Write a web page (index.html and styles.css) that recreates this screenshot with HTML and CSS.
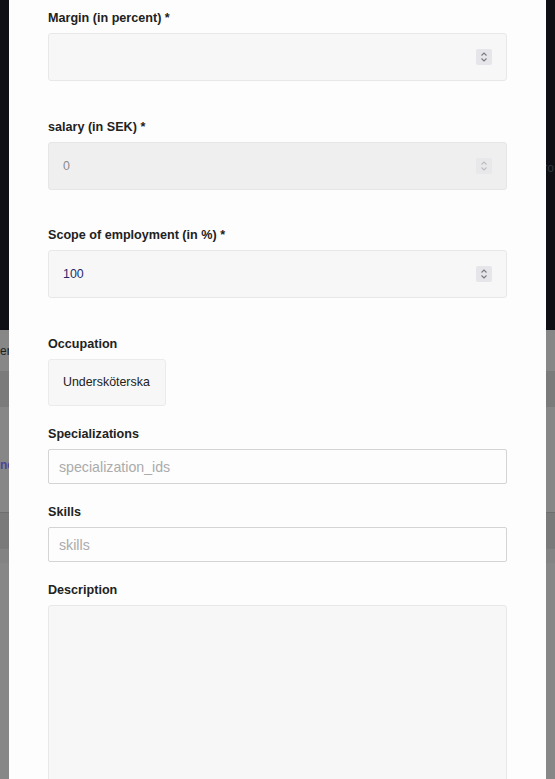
FILE: index.html
```html
<!DOCTYPE html>
<html lang="en">
<head>
<meta charset="utf-8">
<title>Edit position</title>
<link rel="stylesheet" href="styles.css">
</head>
<body>
<div class="page">
  <div class="bg-head"><span class="bg-peek-right">ro</span></div>
  <div class="bg-row bg-r1"><span class="bg-peek">ers</span></div>
  <div class="bg-row bg-r2"></div>
  <div class="bg-row bg-r3"><span class="bg-peek bg-link">nc</span></div>
  <div class="bg-row bg-r4"></div>
  <div class="bg-row bg-r5"></div>
</div>

<div class="modal">
  <form class="form">
    <div class="field field-num">
      <label class="label">Margin (in percent) *</label>
      <div class="num">
        <input class="num-input" type="text" value="">
        <span class="spin"><svg viewBox="0 0 16 16" width="16" height="16"><path d="M5.5 6.5 L8 4 L10.5 6.5 M5.5 9.5 L8 12 L10.5 9.5" fill="none" stroke="#7a7a7e" stroke-width="1.1"/></svg></span>
      </div>
    </div>
    <div class="field field-num">
      <label class="label">salary (in SEK) *</label>
      <div class="num num-disabled">
        <input class="num-input" type="text" value="0" disabled>
        <span class="spin"><svg viewBox="0 0 16 16" width="16" height="16"><path d="M5.5 6.5 L8 4 L10.5 6.5 M5.5 9.5 L8 12 L10.5 9.5" fill="none" stroke="#bdbdc0" stroke-width="1.1"/></svg></span>
      </div>
    </div>
    <div class="field field-num">
      <label class="label">Scope of employment (in %) *</label>
      <div class="num">
        <input class="num-input num-val" type="text" value="100">
        <span class="spin"><svg viewBox="0 0 16 16" width="16" height="16"><path d="M5.5 6.5 L8 4 L10.5 6.5 M5.5 9.5 L8 12 L10.5 9.5" fill="none" stroke="#7a7a7e" stroke-width="1.1"/></svg></span>
      </div>
    </div>
    <div class="field">
      <label class="label">Occupation</label>
      <div class="chip">Undersköterska</div>
    </div>
    <div class="field">
      <label class="label">Specializations</label>
      <input class="text-input" type="text" placeholder="specialization_ids">
    </div>
    <div class="field">
      <label class="label">Skills</label>
      <input class="text-input" type="text" placeholder="skills">
    </div>
    <div class="field">
      <label class="label">Description</label>
      <textarea class="area"></textarea>
    </div>
  </form>
</div>
</body>
</html>
```

FILE: styles.css
```css
html, body {
  margin: 0;
  padding: 0;
  height: 100%;
  overflow: hidden;
}
body {
  background: #878787;
  font-family: "Liberation Sans", Arial, Helvetica, sans-serif;
  color: #222;
}
.page {
  display: flex;
  flex-direction: column;
}
.bg-head {
  height: 330px;
  background: #0f1016;
  display: flex;
  justify-content: flex-end;
  align-items: flex-start;
  padding-right: 1px;
}
.bg-peek-right {
  margin-top: 162px;
  font-size: 12px;
  line-height: 12px;
  color: #34353c;
  white-space: nowrap;
}
.bg-row {
  display: flex;
  align-items: center;
}
.bg-peek {
  white-space: nowrap;
  font-size: 12px;
  color: #1e1e1e;
}
.bg-link {
  font-weight: bold;
  color: #4a469a;
  margin-top: 10px;
}
.bg-r1 { height: 41px; background: #878787; }
.bg-r2 { height: 36px; background: #7b7b7c; }
.bg-r3 { height: 105px; background: #878787; }
.bg-r4 { height: 35px; background: #7a7a7b; border-top: 1px solid #6e6e6e; }
.bg-r5 { height: 14px; background: #838383; border-top: 1px solid #7b7b7b; }

.modal {
  position: fixed;
  top: 0;
  left: 9px;
  width: 537px;
  height: 100vh;
  background: #fdfdfd;
  overflow: hidden;
}
.form {
  padding: 10px 39px 0 39px;
  display: flex;
  flex-direction: column;
}
.field {
  display: flex;
  flex-direction: column;
  align-items: flex-start;
  margin-bottom: 20px;
}
.field-num {
  margin-bottom: 37.5px;
}
.label {
  font-size: 12.6px;
  line-height: 16px;
  font-weight: bold;
  color: #222;
  margin-bottom: 7px;
}
.num {
  box-sizing: border-box;
  width: 459px;
  height: 48px;
  display: flex;
  align-items: center;
  background: #f7f7f7;
  border: 1px solid #e8e8e8;
  border-radius: 3px;
  padding: 0 14px 0 14px;
}
.num-disabled {
  background: #efefef;
  border-color: #e6e6e6;
}
.num-input {
  flex: 1;
  min-width: 0;
  border: 0;
  outline: none;
  background: transparent;
  padding: 0;
  margin: 0;
  font-family: "Liberation Sans", Arial, Helvetica, sans-serif;
  font-size: 12.4px;
  color: #222;
}
.num-disabled .num-input {
  color: #8a8a8a;
}
.num-val {
  color: #27276a;
}
.spin {
  display: flex;
  width: 16px;
  height: 16px;
  background: #e6e6ea;
  border-radius: 2px;
}
.num-disabled .spin {
  background: #e8e8ea;
}
.chip {
  box-sizing: border-box;
  height: 47.5px;
  display: flex;
  align-items: center;
  padding: 0 15px 0 14px;
  background: #f7f7f7;
  border: 1px solid #ebebeb;
  border-radius: 3px;
  font-size: 12.4px;
  color: #222;
}
.text-input {
  box-sizing: border-box;
  width: 459px;
  height: 35px;
  border: 1px solid #d4d4d4;
  border-radius: 2px;
  background: #fdfdfd;
  padding: 0 10px;
  margin: 0;
  font-family: "Liberation Sans", Arial, Helvetica, sans-serif;
  font-size: 14.2px;
  color: #222;
  outline: none;
}
.text-input::placeholder {
  color: #ababab;
}
.area {
  box-sizing: border-box;
  width: 459px;
  height: 260px;
  background: #f7f7f7;
  border: 1px solid #e8e8e8;
  border-radius: 3px;
  margin: 0;
  padding: 10px 14px;
  resize: none;
  outline: none;
  font-family: "Liberation Sans", Arial, Helvetica, sans-serif;
  font-size: 12px;
}
```
